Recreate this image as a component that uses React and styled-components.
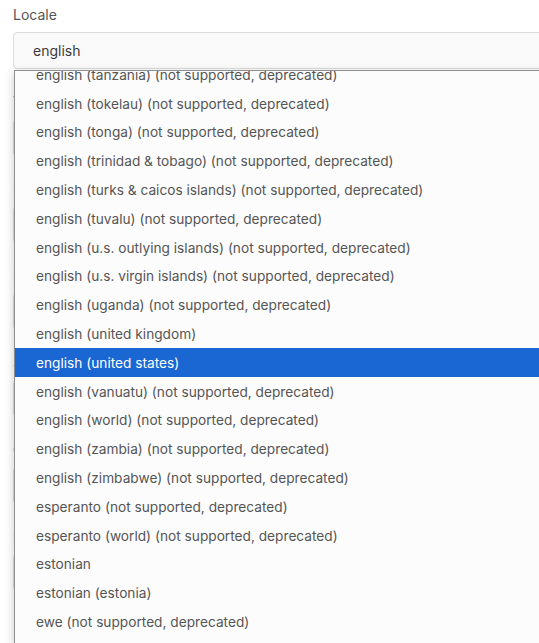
import React from "react";
import styled, { createGlobalStyle } from "styled-components";

const Global = createGlobalStyle`
  html, body { margin: 0; padding: 0; background: #ffffff; overflow: hidden; }
  body { font-family: Inter, "Noto Sans", sans-serif; }
`;

const Page = styled.div`
  position: relative;
  width: 600px;
  height: 643px;
  padding: 6px 0 0 13px;
  box-sizing: border-box;
  overflow: hidden;
`;

const Form = styled.div`
  display: flex;
  flex-direction: column;
  gap: 24px;
`;

const Field = styled.div`
  display: flex;
  flex-direction: column;
  gap: 9px;
`;

const Label = styled.div`
  font-size: 14px;
  line-height: 17px;
  color: #555555;
`;

const Input = styled.div`
  height: 37px;
  box-sizing: border-box;
  width: 560px;
  border: 1px solid #dcdcdc;
  border-radius: 4px;
  background: #fafafa;
  padding: 0 19px;
  display: flex;
  align-items: center;
  font-size: 14px;
  color: #3a3a3a;
`;

const Dropdown = styled.div`
  position: absolute;
  top: 70px;
  left: 14px;
  width: 560px;
  height: 573px;
  box-sizing: border-box;
  border: 1px solid #8f8f8f;
  border-bottom: none;
  background: #fcfcfc;
  box-shadow: 0 3px 9px rgba(0, 0, 0, 0.22);
  overflow: hidden;
`;

const List = styled.ul`
  list-style: none;
  margin: -10.6px 0 0 0;
  padding: 0;
`;

const Item = styled.li`
  height: 28.8px;
  box-sizing: border-box;
  padding: 0 21px;
  display: flex;
  align-items: center;
  font-size: 13.7px;
  white-space: nowrap;
  color: ${(p) => (p.$selected ? "#ffffff" : "#555555")};
  background: ${(p) => (p.$selected ? "#1a66d2" : "transparent")};
`;

const fields = [
  "Timezone",
  "Date format",
  "Language",
  "Start of week",
  "Currency",
  "Number format",
];

const items = [
  "english (tanzania) (not supported, deprecated)",
  "english (tokelau) (not supported, deprecated)",
  "english (tonga) (not supported, deprecated)",
  "english (trinidad & tobago) (not supported, deprecated)",
  "english (turks & caicos islands) (not supported, deprecated)",
  "english (tuvalu) (not supported, deprecated)",
  "english (u.s. outlying islands) (not supported, deprecated)",
  "english (u.s. virgin islands) (not supported, deprecated)",
  "english (uganda) (not supported, deprecated)",
  "english (united kingdom)",
  "english (united states)",
  "english (vanuatu) (not supported, deprecated)",
  "english (world) (not supported, deprecated)",
  "english (zambia) (not supported, deprecated)",
  "english (zimbabwe) (not supported, deprecated)",
  "esperanto (not supported, deprecated)",
  "esperanto (world) (not supported, deprecated)",
  "estonian",
  "estonian (estonia)",
  "ewe (not supported, deprecated)",
];

export default function App() {
  return (
    <Page>
      <Global />
      <Form>
        <Field>
          <Label>Locale</Label>
          <Input>english</Input>
        </Field>
        {fields.map((f) => (
          <Field key={f}>
            <Label>{f}</Label>
            <Input />
          </Field>
        ))}
      </Form>
      <Dropdown>
        <List>
          {items.map((it) => (
            <Item key={it} $selected={it === "english (united states)"}>
              {it}
            </Item>
          ))}
        </List>
      </Dropdown>
    </Page>
  );
}
